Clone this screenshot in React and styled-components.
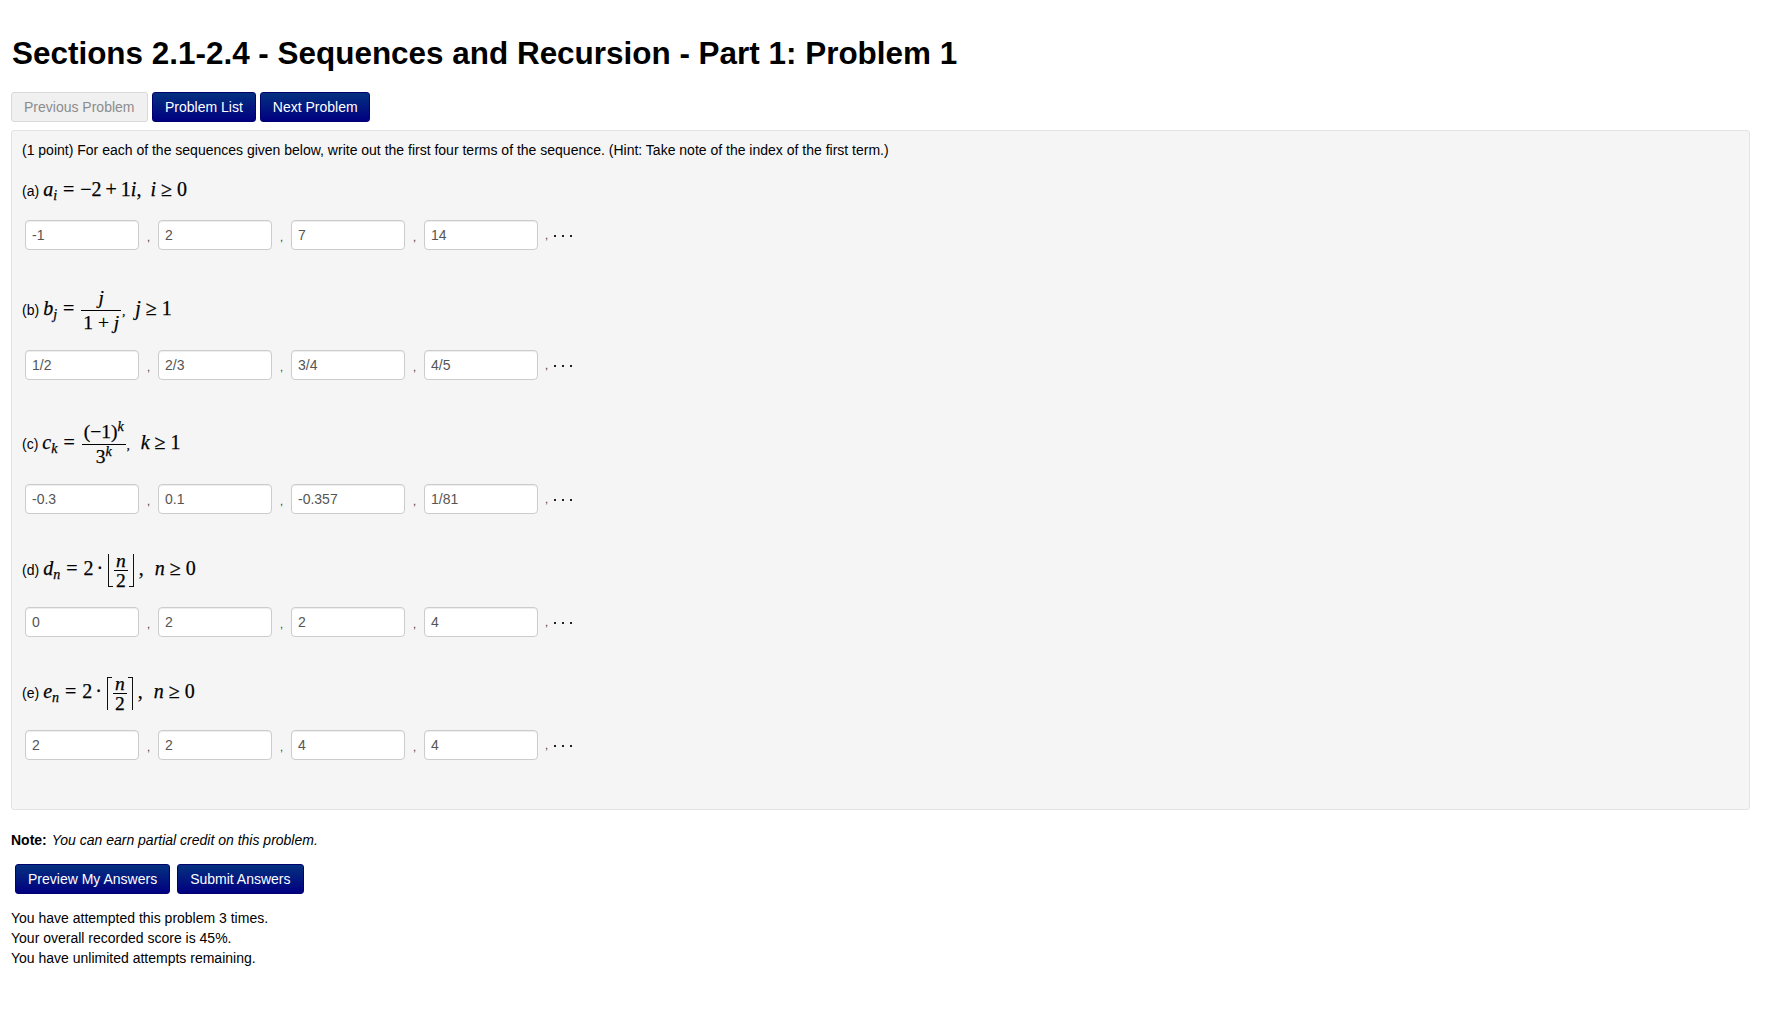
import React from 'react'
import styled, { createGlobalStyle } from 'styled-components'

const Global = createGlobalStyle`
  html, body { margin: 0; padding: 0; background: #fff; }
  body { font-family: "Liberation Sans", Arial, sans-serif; font-size: 14px; line-height: 20px; color: #000; }
`

const Page = styled.div`
  padding: 0 34px 0 11px;
`

const Title = styled.h1`
  margin: 0;
  padding: 32px 0 0 1px;
  font-size: 31.45px;
  line-height: 43px;
  font-weight: bold;
  color: #000;
`

const NavRow = styled.div`
  display: flex;
  gap: 4px;
  margin-top: 17px;
`

const Button = styled.button`
  height: 30px;
  padding: 0 ${p => p.$pad ?? 12}px;
  border: 1px solid #00006e;
  border-radius: 3px;
  background: linear-gradient(to bottom, #04317f, #000080);
  color: #fff;
  font: 14px/20px "Liberation Sans", Arial, sans-serif;
  white-space: nowrap;
  ${p => p.disabled && `
    background: #f0f0f0;
    border-color: #d9d9d9;
    color: #8c8c8c;
  `}
`

const Panel = styled.div`
  margin-top: 8px;
  height: 680px;
  box-sizing: border-box;
  padding: 9px 9px;
  background: #f5f5f5;
  border: 1px solid #e3e3e3;
  border-radius: 3px;
`

const Intro = styled.div`
  color: #000;
  padding-left: 1px;
`

const MathLine = styled.div`
  height: ${p => p.$h}px;
  line-height: ${p => p.$h - p.$shift}px;
  margin-top: ${p => p.$top}px;
  margin-bottom: ${p => p.$bottom}px;
  padding-left: 1px;
  white-space: nowrap;
`

const Tag = styled.span`
  margin-right: 4px;
`

const Formula = styled.span`
  font-family: "Liberation Serif", "Times New Roman", serif;
  font-size: 20px;
  -webkit-text-stroke: 0.25px #000;
  color: #000;
`

const V = styled.i`
  font-style: italic;
  font-weight: normal;
  margin-left: ${p => p.$left ?? 0}px;
`

const Sub = styled.span`
  font-size: 14px;
  line-height: 0;
  font-style: italic;
  vertical-align: -4px;
`

const Sup = styled.span`
  font-size: 14px;
  line-height: 0;
  font-style: italic;
  vertical-align: 7px;
`

const Op = styled.span`
  margin: 0 ${p => p.$gap ?? 6}px;
`

const Frac = styled.span`
  display: inline-flex;
  flex-direction: column;
  align-items: center;
  vertical-align: middle;
  margin: 0 1px;
`

const Num = styled.span`
  padding: 0 2px;
  line-height: ${p => p.$lh}px;
  font-size: 19.5px;
`

const Den = styled(Num)`
  align-self: stretch;
  text-align: center;
  border-top: 1.5px solid #000;
`

const SmallComma = styled.span`
  font-size: 12px;
  margin-right: 2px;
`

const Bracket = styled.span`
  display: inline-block;
  vertical-align: middle;
  width: 4px;
  height: 32px;
  margin: 0 ${p => p.$left ? '0 0 2px' : '5px 0 0'};
  border-style: solid;
  border-color: #111;
  border-width: 0;
  ${p => p.$left ? 'border-left-width: 1.5px;' : 'border-right-width: 1.5px;'}
  ${p => p.$floor ? 'border-bottom-width: 1.5px;' : 'border-top-width: 1.5px;'}
`

const AnswerRow = styled.div`
  display: flex;
  align-items: center;
  padding-left: 4px;
`

const Answer = styled.input`
  box-sizing: border-box;
  width: 114px;
  height: 30px;
  padding: 4px 6px;
  border: 1px solid #ccc;
  border-radius: 4px;
  background: #fff;
  box-shadow: inset 0 1px 1px rgba(0, 0, 0, 0.075);
  color: #555;
  font: 14px/20px "Liberation Sans", Arial, sans-serif;
`

const Comma = styled.span`
  width: 19px;
  text-align: center;
  font-size: 11px;
  padding-top: 4px;
  color: #333;
`

const Dots = styled.span`
  display: flex;
  align-items: center;
  gap: 6px;
  margin-left: 7px;
  font-size: 11px;
  color: #333;
`

const Dot = styled.i`
  width: 2px;
  height: 2px;
  margin-top: 1px;
  background: #222;
`

const Note = styled.div`
  margin-top: 20px;
  font-size: 14px;
  em { margin-left: 1px; }
`

const ActionRow = styled.div`
  display: flex;
  gap: 7px;
  margin: 14px 0 0 4px;
`

const Status = styled.div`
  margin-top: 14px;
`

const answers = [
  { tag: '(a)', h: 20, shift: 4, top: 21, bottom: 19, values: ['-1', '2', '7', '14'], math: (
    <Formula>
      <V>a</V><Sub>i</Sub><Op>=</Op>−2<Op $gap={4}>+</Op>1<V>i</V>,<V $left={9}>i</V><Op $gap={5}>≥</Op>0
    </Formula>
  ) },
  { tag: '(b)', h: 48, shift: 4, top: 36, bottom: 16, values: ['1/2', '2/3', '3/4', '4/5'], math: (
    <Formula>
      <V>b</V><Sub>j</Sub><Op>=</Op>
      <Frac><Num $lh={24}><V>j</V></Num><Den $lh={24}>1 + <V>j</V></Den></Frac><SmallComma>,</SmallComma><V $left={8}>j</V><Op $gap={5}>≥</Op>1
    </Formula>
  ) },
  { tag: '(c)', h: 53, shift: 1, top: 36, bottom: 15, values: ['-0.3', '0.1', '-0.357', '1/81'], math: (
    <Formula>
      <V>c</V><Sub>k</Sub><Op>=</Op>
      <Frac><Num $lh={24}>(−1)<Sup>k</Sup></Num><Den $lh={24}>3<Sup>k</Sup></Den></Frac><SmallComma>,</SmallComma><V $left={9}>k</V><Op $gap={5}>≥</Op>1
    </Formula>
  ) },
  { tag: '(d)', h: 42, shift: 4, top: 35, bottom: 16, values: ['0', '2', '2', '4'], math: (
    <Formula>
      <V>d</V><Sub>n</Sub><Op>=</Op>2<Op $gap={3}>·</Op>
      <Bracket $left $floor /><Frac><Num $lh={19}><V>n</V></Num><Den $lh={19}>2</Den></Frac><Bracket $floor />,<V $left={11}>n</V><Op $gap={5}>≥</Op>0
    </Formula>
  ) },
  { tag: '(e)', h: 41, shift: 4, top: 36, bottom: 16, values: ['2', '2', '4', '4'], math: (
    <Formula>
      <V>e</V><Sub>n</Sub><Op>=</Op>2<Op $gap={3}>·</Op>
      <Bracket $left /><Frac><Num $lh={19}><V>n</V></Num><Den $lh={19}>2</Den></Frac><Bracket />,<V $left={11}>n</V><Op $gap={5}>≥</Op>0
    </Formula>
  ) },
]

export default function App() {
  return (
    <Page>
      <Global />
      <Title>Sections 2.1-2.4 - Sequences and Recursion - Part 1: Problem 1</Title>
      <NavRow>
        <Button disabled>Previous Problem</Button>
        <Button $pad={12.5}>Problem List</Button>
        <Button $pad={11.5}>Next Problem</Button>
      </NavRow>
      <Panel>
        <Intro>(1 point) For each of the sequences given below, write out the first four terms of the sequence. (Hint: Take note of the index of the first term.)</Intro>
        {answers.map(a => (
          <React.Fragment key={a.tag}>
            <MathLine $h={a.h} $shift={a.shift} $top={a.top} $bottom={a.bottom}><Tag>{a.tag}</Tag>{a.math}</MathLine>
            <AnswerRow>
              {a.values.map((v, i) => (
                <React.Fragment key={i}>
                  <Answer defaultValue={v} readOnly />
                  {i < 3 ? <Comma>,</Comma> : <Dots>,<Dot /><Dot /><Dot /></Dots>}
                </React.Fragment>
              ))}
            </AnswerRow>
          </React.Fragment>
        ))}
      </Panel>
      <Note><b>Note:</b> <em>You can earn partial credit on this problem.</em></Note>
      <ActionRow>
        <Button>Preview My Answers</Button>
        <Button>Submit Answers</Button>
      </ActionRow>
      <Status>
        You have attempted this problem 3 times.<br />
        Your overall recorded score is 45%.<br />
        You have unlimited attempts remaining.
      </Status>
    </Page>
  )
}
